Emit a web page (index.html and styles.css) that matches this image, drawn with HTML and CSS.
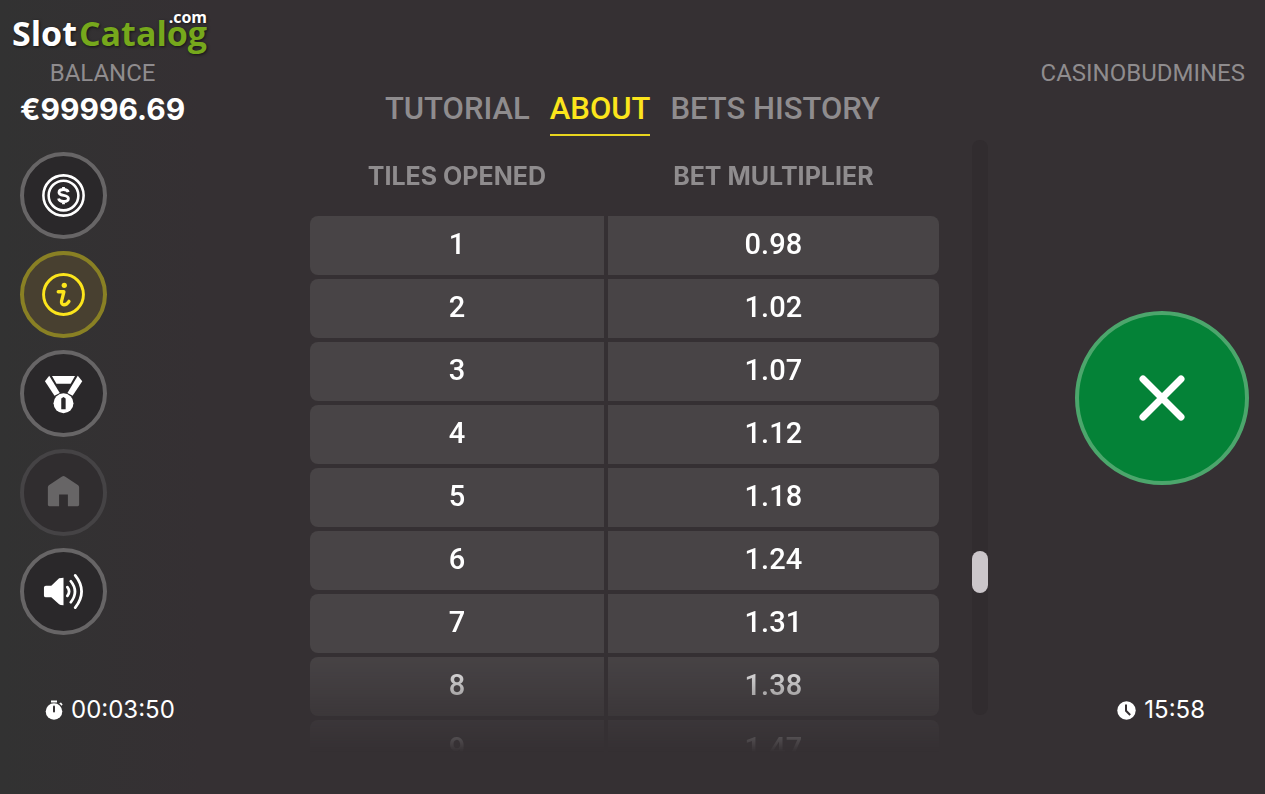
FILE: index.html
```html
<!DOCTYPE html>
<html lang="en">
<head>
    <meta charset="UTF-8">
    <meta name="viewport" content="width=device-width, initial-scale=1.0">
    <title>Casinobudmines - About</title>
    <link rel="stylesheet" href="styles.css">
</head>
<body>
    <a href="#" class="logo"><span class="logo-slot">Slot</span><span class="logo-catalog">Catalog</span><span class="logo-com">.com</span></a>

    <div class="game">
        <aside class="side-left">
            <div class="balance">
                <div class="label">BALANCE</div>
                <div class="amount">€99996.69</div>
            </div>

            <nav class="menu">
                <button type="button" class="round-btn" aria-label="Bets">
                    <svg width="43" height="43" viewBox="0 0 44 44" fill="none" stroke="currentColor">
                        <circle cx="22" cy="22" r="20.6" stroke-width="2.6"/>
                        <circle cx="22" cy="22" r="15.2" stroke-width="2.6"/>
                        <path d="M26.8 18.6C26.4 16.8 24.6 15.9 22 15.9C19.2 15.9 17.4 17 17.4 18.9C17.4 23.2 27 20.5 27 25C27 27 25 28.1 22 28.1C19.2 28.1 17.3 27.1 17 25.1M22 13.2V16M22 28V31" stroke-width="2.9"/>
                    </svg>
                </button>
                <button type="button" class="round-btn active" aria-label="Info">
                    <svg width="43" height="43" viewBox="0 0 44 44" fill="none" stroke="currentColor" stroke-linecap="round" stroke-linejoin="round">
                        <circle cx="22" cy="22" r="20.4" stroke-width="3"/>
                        <circle cx="22.8" cy="12.6" r="2.7" fill="currentColor" stroke="none"/>
                        <path d="M16.6 19.2H22.4L20 28.8C19.2 33.8 24.8 33.6 27.6 29" stroke-width="3.4"/>
                    </svg>
                </button>
                <button type="button" class="round-btn" aria-label="Tournaments">
                    <svg width="43" height="43" viewBox="0 0 44 44" fill="currentColor">
                        <path d="M10.2 4H33.8L29.3 12H14.8Z"/>
                        <path d="M7.4 3.8L18.2 21.6L12.8 24.2L3 9.5Z"/>
                        <path d="M36.6 3.8L41.2 9.5L31.3 24.2L26 21.6Z"/>
                        <circle cx="22" cy="32" r="10.2"/>
                        <path d="M19.7 27.2L22 25.5L24.2 27.2V38H19.7Z" fill="#2a282a"/>
                    </svg>
                </button>
                <button type="button" class="round-btn" aria-label="Home" disabled>
                    <svg width="43" height="43" viewBox="0 0 44 44" fill="currentColor">
                        <path d="M20.5 5.6Q22 4.6 23.5 5.6L37 14.5Q38 15.3 38 16.5V34.5Q38 36 36.500 36H26.500V24H17.500V36H7.500Q6 36 6 34.500V16.500Q6 15.300 7 14.500Z"/>
                    </svg>
                </button>
                <button type="button" class="round-btn" aria-label="Sound">
                    <svg width="43" height="43" viewBox="0 0 44 44" fill="none" stroke="currentColor" stroke-linecap="round">
                        <path d="M4 16H9.5L17.5 8.5Q18.5 8 22 8V36Q18.5 36 17.5 35L9.5 28H4Q2 28 2 26V18Q2 16 4 16Z" fill="currentColor" stroke="none"/>
                        <path d="M26 17.5Q29.5 22 26 26.5M29.5 11.5Q38 22 29.5 33M34 5.5Q47 22 34 38.5" stroke-width="2.8"/>
                    </svg>
                </button>
            </nav>

            <div class="time">
                <svg width="18" height="20" viewBox="0 0 18 20" fill="currentColor">
                    <circle cx="9" cy="11.5" r="8.3"/>
                    <rect x="6" y="0.5" width="6" height="2"/>
                    <path d="M14.2 3.2L16 2.4L17.6 4.4L16.6 5.8Z"/>
                    <rect x="8" y="5.5" width="2" height="7" rx="1" fill="#353133"/>
                </svg>
                <span>00:03:50</span>
            </div>
        </aside>

        <main class="panel">
            <nav class="tabs">
                <button type="button" class="tab">TUTORIAL</button>
                <button type="button" class="tab active">ABOUT</button>
                <button type="button" class="tab">BETS HISTORY</button>
            </nav>

            <div class="scroll-area">
                <div class="scroll-view">
                    <table class="odds">
                        <thead>
                            <tr><th class="col-tiles">TILES OPENED</th><th>BET MULTIPLIER</th></tr>
                        </thead>
                        <tbody>
                            <tr><td>1</td><td>0.98</td></tr>
                            <tr><td>2</td><td>1.02</td></tr>
                            <tr><td>3</td><td>1.07</td></tr>
                            <tr><td>4</td><td>1.12</td></tr>
                            <tr><td>5</td><td>1.18</td></tr>
                            <tr><td>6</td><td>1.24</td></tr>
                            <tr><td>7</td><td>1.31</td></tr>
                            <tr><td>8</td><td>1.38</td></tr>
                            <tr><td>9</td><td>1.47</td></tr>
                        </tbody>
                    </table>
                </div>
                <div class="track"><div class="thumb"></div></div>
            </div>
        </main>

        <aside class="side-right">
            <div class="label game-name">CASINOBUDMINES</div>
            <button type="button" class="close-btn" aria-label="Close">
                <svg width="46" height="46" viewBox="0 0 46 46" fill="none" stroke="currentColor" stroke-width="7" stroke-linecap="round">
                    <path d="M4 4L42 42M42 4L4 42"/>
                </svg>
            </button>
            <div class="time">
                <svg width="19" height="20" viewBox="0 0 19 20" fill="currentColor">
                    <circle cx="9.5" cy="10.5" r="9.2"/>
                    <path d="M9 4.5V10.8L13.2 15" fill="none" stroke="#353033" stroke-width="2"/>
                </svg>
                <span>15:58</span>
            </div>
        </aside>
    </div>
</body>
</html>
```
FILE: styles.css
```css
* {
    box-sizing: border-box;
}
body {
    margin: 0;
    font-family: Roboto, Arial, sans-serif;
    background: linear-gradient(90deg, #323232 0%, #353033 16%);
    color: white;
}
button {
    font-family: inherit;
    border: none;
    background: none;
    padding: 0;
    cursor: pointer;
}
svg {
    display: block;
}

/* Watermark logo over the game */
.logo {
    position: absolute;
    top: 9px;
    left: 12px;
    display: flex;
    gap: 2px;
    font-family: "Open Sans", sans-serif;
    font-size: 34px;
    font-weight: bold;
    line-height: 48px;
    text-decoration: none;
    text-shadow: 1px 1px 3px rgba(0,0,0,0.6);
}
.logo-slot,
.logo-com {
    color: white;
}
.logo-catalog {
    color: #76a81c;
}
.logo-com {
    position: absolute;
    top: -2px;
    right: 0;
    font-size: 16px;
    line-height: 20px;
}

.game {
    display: grid;
    grid-template-columns: 306px 1fr 277px;
    height: 100vh;
    min-height: 740px;
}
.label {
    font-size: 24px;
    line-height: 28px;
    color: #8f8c8e;
}
.time {
    display: flex;
    align-items: center;
    gap: 8px;
    margin-top: auto;
    font-family: Inter, sans-serif;
    font-size: 24px;
    line-height: 28px;
}

.side-left {
    display: flex;
    flex-direction: column;
    align-items: flex-start;
    padding: 59px 0 70px 20px;
}
.balance {
    text-align: center;
}
.amount {
    font-family: Inter, sans-serif;
    font-size: 30px;
    font-weight: bold;
    line-height: 44px;
}
.menu {
    display: flex;
    flex-direction: column;
    gap: 12px;
    margin-top: 21px;
}
.round-btn {
    display: flex;
    align-items: center;
    justify-content: center;
    width: 87px;
    height: 87px;
    border: 4px solid #676566;
    border-radius: 50%;
    background: #2a282a;
    color: white;
}
.round-btn.active {
    border-color: #898024;
    background: #484030;
    color: #fce51c;
}
.round-btn:disabled {
    border-color: #454345;
    background: #302d2f;
    color: #676566;
    cursor: default;
}
.side-left .time {
    margin-left: 25px;
}

.panel {
    display: flex;
    flex-direction: column;
    gap: 4px;
    min-height: 0;
    padding: 92px 0 42px;
}
.tabs {
    display: flex;
    justify-content: center;
    gap: 20px;
    margin-right: 29px;
}
.tab {
    padding-bottom: 8px;
    border-bottom: 2px solid transparent;
    font-size: 31px;
    font-weight: 500;
    line-height: 34px;
    color: #8f8c8e;
}
.tab.active {
    border-color: #e8d51f;
    color: #fce51c;
}
.scroll-area {
    display: flex;
    flex: 1;
    gap: 29px;
    min-height: 0;
}
.scroll-view {
    flex: 1;
    overflow: hidden;
    mask-image: linear-gradient(to top, transparent 0, black 100px);
}
.odds {
    width: 100%;
    table-layout: fixed;
    border-spacing: 4px;
}
.odds th {
    height: 68px;
    padding: 0 0 4px;
    font-family: Inter, sans-serif;
    font-size: 25px;
    font-weight: bold;
    color: #8f8c8e;
}
.col-tiles {
    width: 47%;
}
.odds td {
    height: 59px;
    padding: 0 0 4px;
    background: #484446;
    font-size: 29px;
    font-weight: 500;
    text-align: center;
}
.odds td:first-child {
    border-radius: 8px 0 0 8px;
}
.odds td:last-child {
    border-radius: 0 8px 8px 0;
}
.track {
    position: relative;
    width: 16px;
    margin-bottom: 37px;
    border-radius: 8px;
    background: #312c2f;
}
.thumb {
    position: absolute;
    top: 71.5%;
    width: 16px;
    height: 42px;
    border-radius: 8px;
    background: #cbc6ca;
}

.side-right {
    display: flex;
    flex-direction: column;
    align-items: flex-end;
    padding: 59px 16px 70px 0;
}
.game-name {
    margin-right: 4px;
    margin-bottom: 12px;
}
.close-btn {
    display: flex;
    align-items: center;
    justify-content: center;
    width: 174px;
    height: 174px;
    margin-top: auto;
    border: 4px solid #4ca66c;
    border-radius: 50%;
    background: #048237;
    color: white;
}
.side-right .time {
    margin-right: 44px;
}
```
